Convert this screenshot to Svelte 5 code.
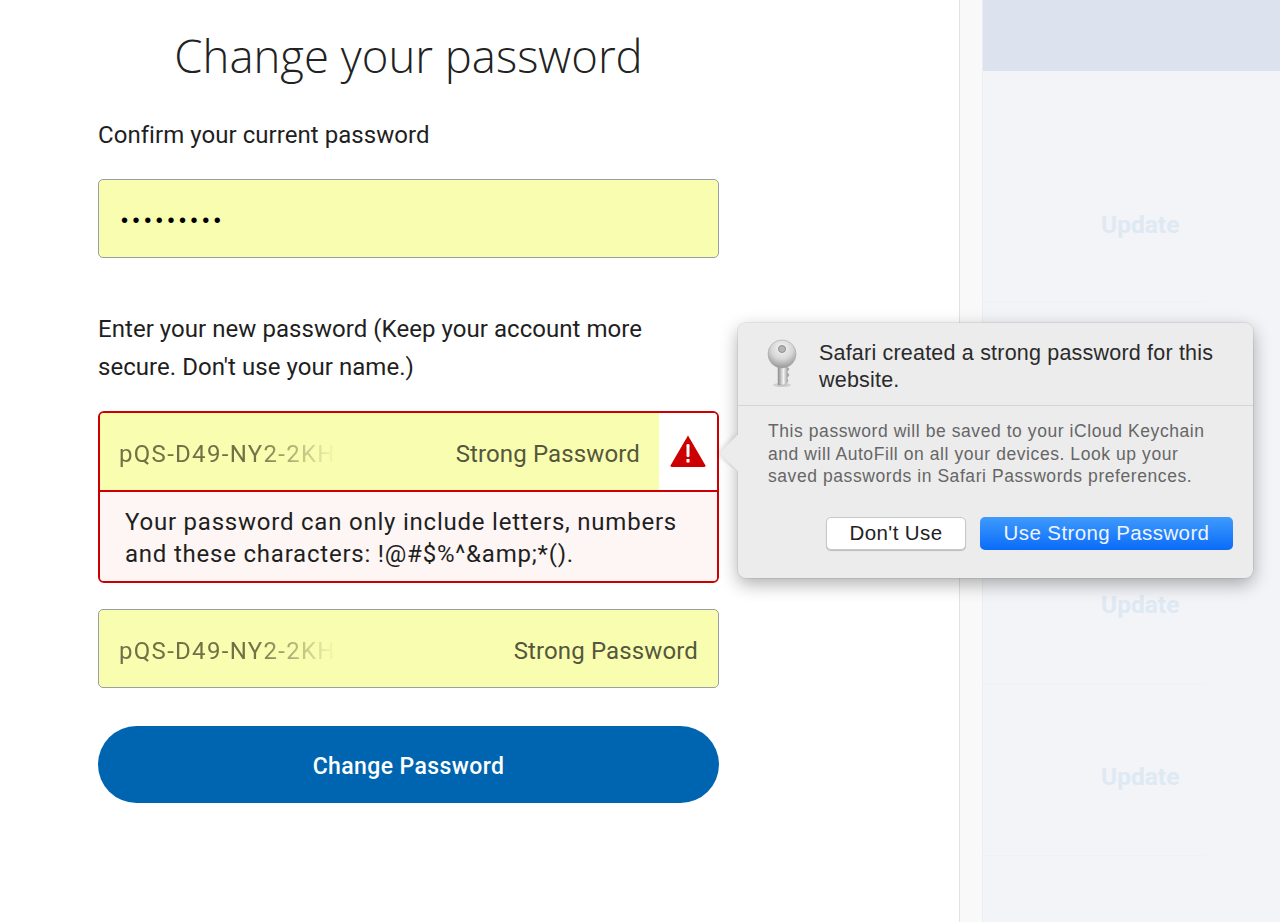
<script lang="ts">
    const pwd = 'pQS-D49-NY2-2KH';
    const rows = [
        { id: 1, tall: true, update: true },
        { id: 2, tall: true, update: false },
        { id: 3, tall: false, update: true },
        { id: 4, tall: false, update: true }
    ];
</script>

<div class="page">
    <main class="main">
        <form class="form" on:submit|preventDefault>
            <h1>Change your password</h1>

            <p class="label first">Confirm your current password</p>
            <div class="field">
                <span class="dots">•••••••••</span>
            </div>

            <p class="label second">Enter your new password (Keep your account more secure. Don't use your name.)</p>

            <div class="error-group">
                <div class="error-top">
                    <div class="field-inner">
                        <span class="pwd">{pwd}</span>
                        <span class="strong">Strong Password</span>
                    </div>
                    <div class="alert">
                        <svg width="36" height="33" viewBox="0 0 36 33">
                            <path d="M18 0.5 L35.5 30.5 Q35.5 32 34 32 L2 32 Q0.5 32 0.5 30.5 Z" fill="#cc0000" />
                            <rect x="16.5" y="9" width="3" height="13" rx="1.2" fill="#fff" />
                            <rect x="16.5" y="24" width="3" height="3.5" fill="#fff" />
                        </svg>
                    </div>
                </div>
                <div class="error-msg">Your password can only include letters, numbers and these characters: !@#$%^&amp;amp;*().</div>
            </div>

            <div class="field confirm">
                <span class="pwd">{pwd}</span>
                <span class="strong">Strong Password</span>
            </div>

            <button class="submit" type="submit">Change Password</button>
        </form>
    </main>

    <div class="gutter"></div>

    <aside class="side">
        <div class="side-head"></div>
        {#each rows as row (row.id)}
            <div class="row" class:tall={row.tall}>
                {#if row.update}<span class="update">Update</span>{/if}
            </div>
        {/each}
    </aside>

    <div class="popover">
        <div class="arrow"></div>
        <div class="pop-head">
            <svg class="key" width="32" height="50" viewBox="0 0 32 50">
                <defs>
                    <radialGradient id="bow" cx="0.5" cy="0.3" r="0.7">
                        <stop offset="0" stop-color="#f7f7f7" />
                        <stop offset="0.55" stop-color="#d6d6d6" />
                        <stop offset="1" stop-color="#979797" />
                    </radialGradient>
                    <linearGradient id="shaft" x1="0" x2="1" y1="0" y2="0">
                        <stop offset="0" stop-color="#8c8c8c" />
                        <stop offset="0.5" stop-color="#f2f2f2" />
                        <stop offset="1" stop-color="#8a8a8a" />
                    </linearGradient>
                </defs>
                <ellipse cx="16" cy="46" rx="9" ry="2" fill="#000" opacity="0.12" />
                <path d="M12 22 H20 V27 L23 30 L21 33 L23 36 L21 39 L22 42 L19 46 H12 Z" fill="url(#shaft)" stroke="#9a9a9a" stroke-width="0.5" />
                <circle cx="16" cy="15" r="14" fill="url(#bow)" stroke="#a8a8a8" stroke-width="0.6" />
                <circle cx="16" cy="10" r="3.5" fill="#b5b5b5" stroke="#8f8f8f" stroke-width="1" />
            </svg>
            <div class="pop-title">Safari created a strong password for this website.</div>
        </div>
        <div class="pop-body">This password will be saved to your iCloud Keychain and will AutoFill on all your devices. Look up your saved passwords in Safari Passwords preferences.</div>
        <div class="pop-actions">
            <button class="btn-plain" type="button">Don't Use</button>
            <button class="btn-blue" type="button">Use Strong Password</button>
        </div>
    </div>
</div>

<style>
    :global(body) {
        margin: 0;
        background: #fff;
    }

    .page {
        position: relative;
        display: flex;
        width: 1280px;
        height: 922px;
        overflow: hidden;
        font-family: Roboto, "Liberation Sans", sans-serif;
        color: #1a1a1a;
    }

    .main {
        width: 959px;
        border-right: 1px solid #e3e3e3;
        box-sizing: content-box;
        background: #fff;
    }

    .form {
        width: 621px;
        margin-left: 98px;
    }

    h1 {
        margin: 0;
        padding-top: 23px;
        font-family: "Open Sans", sans-serif;
        font-size: 45.5px;
        line-height: 64px;
        font-weight: 300;
        text-align: center;
        color: #222;
    }

    .label {
        margin: 0;
        font-size: 24px;
        line-height: 38px;
        letter-spacing: 0.05px;
        color: #1f1f1f;
    }

    .label.first {
        padding-top: 29px;
        padding-bottom: 25px;
    }

    .label.second {
        padding-top: 52px;
        padding-bottom: 25px;
    }

    .field {
        box-sizing: border-box;
        height: 79px;
        display: flex;
        align-items: center;
        justify-content: space-between;
        padding: 4px 20px 0;
        background: #f9fdb0;
        border: 1px solid #9a9fa3;
        border-radius: 5px;
    }

    .dots {
        padding-left: 2px;
        font-family: "Liberation Sans", sans-serif;
        font-size: 20px;
        letter-spacing: 4.6px;
        color: #000;
    }

    .pwd {
        font-size: 24px;
        letter-spacing: 1.3px;
        color: #6f7146;
        -webkit-mask-image: linear-gradient(90deg, #000 62%, transparent 100%);
        mask-image: linear-gradient(90deg, #000 62%, transparent 100%);
    }

    .strong {
        font-size: 24px;
        letter-spacing: 0.13px;
        color: #55573d;
    }

    .error-group {
        box-sizing: border-box;
        height: 172px;
        border: 2px solid #cc0000;
        border-radius: 6px;
        overflow: hidden;
        display: flex;
        flex-direction: column;
    }

    .error-top {
        height: 79px;
        flex: none;
        box-sizing: border-box;
        display: flex;
        border-bottom: 2px solid #cc0000;
    }

    .field-inner {
        flex: 1;
        display: flex;
        align-items: center;
        justify-content: space-between;
        padding: 4px 19px 0 19px;
        background: #f9fdb0;
    }

    .alert {
        width: 58px;
        display: flex;
        align-items: center;
        justify-content: center;
        background: #fff;
    }

    .error-msg {
        flex: 1;
        padding: 14px 25px 0;
        background: #fdf6f5;
        font-size: 24px;
        line-height: 32px;
        letter-spacing: 0.78px;
        color: #1f1f1f;
    }

    .confirm {
        margin-top: 26px;
    }

    .submit {
        display: block;
        width: 100%;
        height: 77px;
        margin-top: 38px;
        padding-top: 4px;
        border: none;
        border-radius: 39px;
        background: #0065b1;
        color: #fff;
        font-family: inherit;
        font-size: 23px;
        font-weight: 500;
        letter-spacing: 0.4px;
    }

    .gutter {
        width: 23px;
        background: #f9f9f9;
        border-right: 1px solid #ebedf0;
        box-sizing: border-box;
    }

    .side {
        flex: 1;
        background: #f2f4f8;
    }

    .side-head {
        height: 71px;
        background: #dce3ee;
    }

    .row {
        box-sizing: border-box;
        height: 172px;
        display: flex;
        align-items: flex-end;
        padding: 0 0 65px 118px;
        position: relative;
    }

    .row.tall {
        height: 231px;
        padding-bottom: 63px;
    }

    .row:nth-child(3) {
        height: 210px;
    }

    .row::after {
        content: '';
        position: absolute;
        left: 0;
        bottom: 0;
        width: 222px;
        height: 1px;
        background: #eff1f5;
    }

    .update {
        font-size: 24.5px;
        line-height: 28px;
        font-weight: 700;
        color: #dfe9f3;
    }

    .popover {
        position: absolute;
        left: 738px;
        top: 323px;
        width: 515px;
        height: 255px;
        box-sizing: border-box;
        background: #ececec;
        border-radius: 8px;
        box-shadow: 0 0 0 1px rgba(0, 0, 0, 0.06), 0 6px 18px rgba(0, 0, 0, 0.32);
        font-family: "Liberation Sans", Arial, sans-serif;
    }

    .arrow {
        position: absolute;
        left: -13px;
        top: 117px;
        width: 26px;
        height: 26px;
        background: #ececec;
        transform: rotate(45deg);
        box-shadow: -2px 2px 5px rgba(0, 0, 0, 0.12);
        clip-path: polygon(-30% -30%, 100% 100%, -30% 130%);
    }

    .pop-head {
        box-sizing: border-box;
        height: 83px;
        display: flex;
        padding: 17px 20px 0 28px;
        border-bottom: 1px solid #d5d5d5;
    }

    .key {
        flex: none;
        margin: -1px 21px 0 0;
    }

    .pop-title {
        font-size: 21.5px;
        line-height: 27px;
        letter-spacing: 0.2px;
        color: #2a2a2a;
    }

    .pop-body {
        padding: 14px 30px 0;
        font-size: 17.5px;
        line-height: 22.5px;
        letter-spacing: 0.57px;
        color: #666;
    }

    .pop-actions {
        display: flex;
        justify-content: flex-end;
        align-items: center;
        gap: 14px;
        padding: 29px 20px 0 0;
    }

    .pop-actions button {
        box-sizing: border-box;
        height: 33px;
        font-family: inherit;
        font-size: 20.5px;
        letter-spacing: 0.4px;
    }

    .btn-plain {
        width: 140px;
        background: #fff;
        border: 1px solid #c8c8c8;
        border-radius: 5px;
        color: #222;
        box-shadow: 0 1px 1px rgba(0, 0, 0, 0.2);
    }

    .btn-blue {
        width: 253px;
        background: linear-gradient(#3f9bfc, #0a6bf9);
        border: none;
        border-radius: 5px;
        color: #eef4ff;
    }
</style>
